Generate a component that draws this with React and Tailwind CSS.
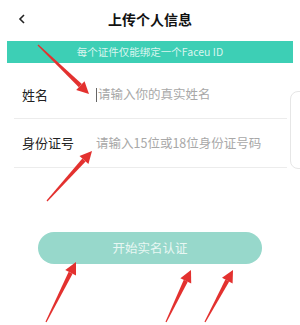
import React from "react";

const arrows = [
  { from: [38, 45], to: [89, 94] },
  { from: [47, 201], to: [92, 151] },
  { from: [46, 322], to: [76, 262] },
  { from: [166, 322], to: [191, 270] },
  { from: [205, 322], to: [233, 270] },
];

// tapered red arrow (annotation)
function Arrow({ from, to }) {
  const [x1, y1] = from;
  const [x2, y2] = to;
  const dx = x2 - x1;
  const dy = y2 - y1;
  const len = Math.hypot(dx, dy);
  const ux = dx / len;
  const uy = dy / len;
  const nx = -uy;
  const ny = ux;
  const headLen = 12;
  const headW = 6;
  const bx = x2 - ux * headLen;
  const by = y2 - uy * headLen;
  const shaft = [
    [x1 + nx * 0.6, y1 + ny * 0.6],
    [bx + nx * 2.2, by + ny * 2.2],
    [bx - nx * 2.2, by - ny * 2.2],
    [x1 - nx * 0.6, y1 - ny * 0.6],
  ];
  const head = [
    [x2, y2],
    [bx + nx * headW, by + ny * headW],
    [bx - nx * headW, by - ny * headW],
  ];
  const pts = (a) => a.map((p) => p.join(",")).join(" ");
  return (
    <g fill="#e3312f">
      <polygon points={pts(shaft)} />
      <polygon points={pts(head)} />
    </g>
  );
}

export default function App() {
  return (
    <div
      className="relative w-[300px] h-[325px] bg-white overflow-hidden"
      style={{ fontFamily: '"Noto Sans CJK SC", "Noto Sans", sans-serif' }}
    >
      {/* Header */}
      <div className="relative flex items-center justify-center h-[38px]">
        <svg
          className="absolute left-[18px] top-[14px]"
          width="8"
          height="10"
          viewBox="0 0 8 10"
          fill="none"
          stroke="#222"
          strokeWidth="1.6"
        >
          <polyline points="6,1 2,5 6,9" />
        </svg>
        <h1 className="text-[14px] font-bold text-[#111] pt-[0px]">上传个人信息</h1>
      </div>

      {/* Banner */}
      <div className="mx-[7px] mt-[3px] h-[22px] bg-[#3dcfb5] flex items-center justify-center">
        <span className="text-[10.5px] text-[#d9f5ef]">每个证件仅能绑定一个Faceu ID</span>
      </div>

      {/* Form */}
      <div className="relative mt-[8px]">
        <div className="mx-[14px] mr-[13px] h-[48px] flex items-center border-b border-[#ececec]">
          <span className="w-[82px] pl-[8px] text-[13px] text-[#222]">姓名</span>
          <span className="w-px h-[14px] bg-[#666] mr-[1px]" />
          <span className="text-[12.5px] text-[#a8a8a8]">请输入你的真实姓名</span>
        </div>
        <div className="mx-[14px] mr-[13px] h-[49px] flex items-center border-b border-[#ececec]">
          <span className="w-[82px] pl-[8px] text-[13px] text-[#222]">身份证号</span>
          <span className="text-[12.5px] text-[#a8a8a8]">请输入15位或18位身份证号码</span>
        </div>
        <div className="absolute right-[-10px] top-[20px] w-[20px] h-[78px] border border-[#e6e6e6] rounded-[8px]" />
      </div>

      {/* Button */}
      <div className="mt-[64px] flex justify-center">
        <button className="w-[224px] h-[32px] rounded-full bg-[#97d8cb] text-[12.5px] text-[#e8f7f3]">
          开始实名认证
        </button>
      </div>

      {/* Annotation arrows */}
      <svg className="absolute inset-0 pointer-events-none" width="300" height="325">
        {arrows.map((a, i) => (
          <Arrow key={i} from={a.from} to={a.to} />
        ))}
      </svg>
    </div>
  );
}
